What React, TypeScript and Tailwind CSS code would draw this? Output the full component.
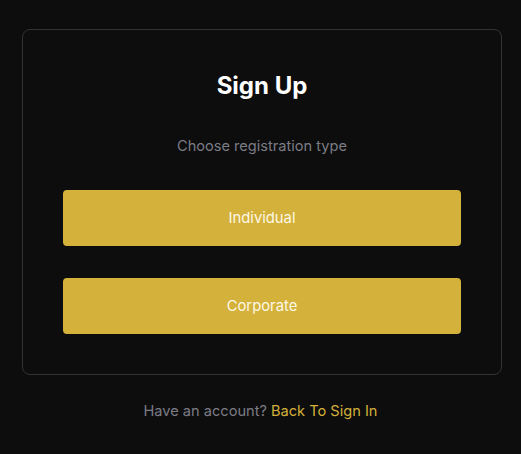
export default function App() {
  return (
    <div
      className="min-h-[454px] bg-[#0d0d0d] pt-[29px]"
      style={{ fontFamily: "Inter, 'Noto Sans', sans-serif" }}
    >
      <div className="ml-[22px] w-[480px] rounded-lg border border-[#333333] px-10 py-10">
        <h1 className="text-center text-[24px] leading-8 font-bold text-white">Sign Up</h1>
        <p className="mt-8 text-center text-[14.6px] leading-6 text-[#7c7c86]">Choose registration type</p>
        <div className="mt-8 flex flex-col gap-8">
          <button className="h-14 w-full rounded bg-[#d4b13a] text-[14.8px] text-[#fdf8e6]">Individual</button>
          <button className="h-14 w-full rounded bg-[#d4b13a] text-[14.8px] text-[#fdf8e6]">Corporate</button>
        </div>
      </div>
      <p className="mt-[24px] text-center text-[14.6px] leading-6 text-[#7c7c86]">
        Have an account? <a className="text-[#d4b13a]">Back To Sign In</a>
      </p>
    </div>
  )
}
